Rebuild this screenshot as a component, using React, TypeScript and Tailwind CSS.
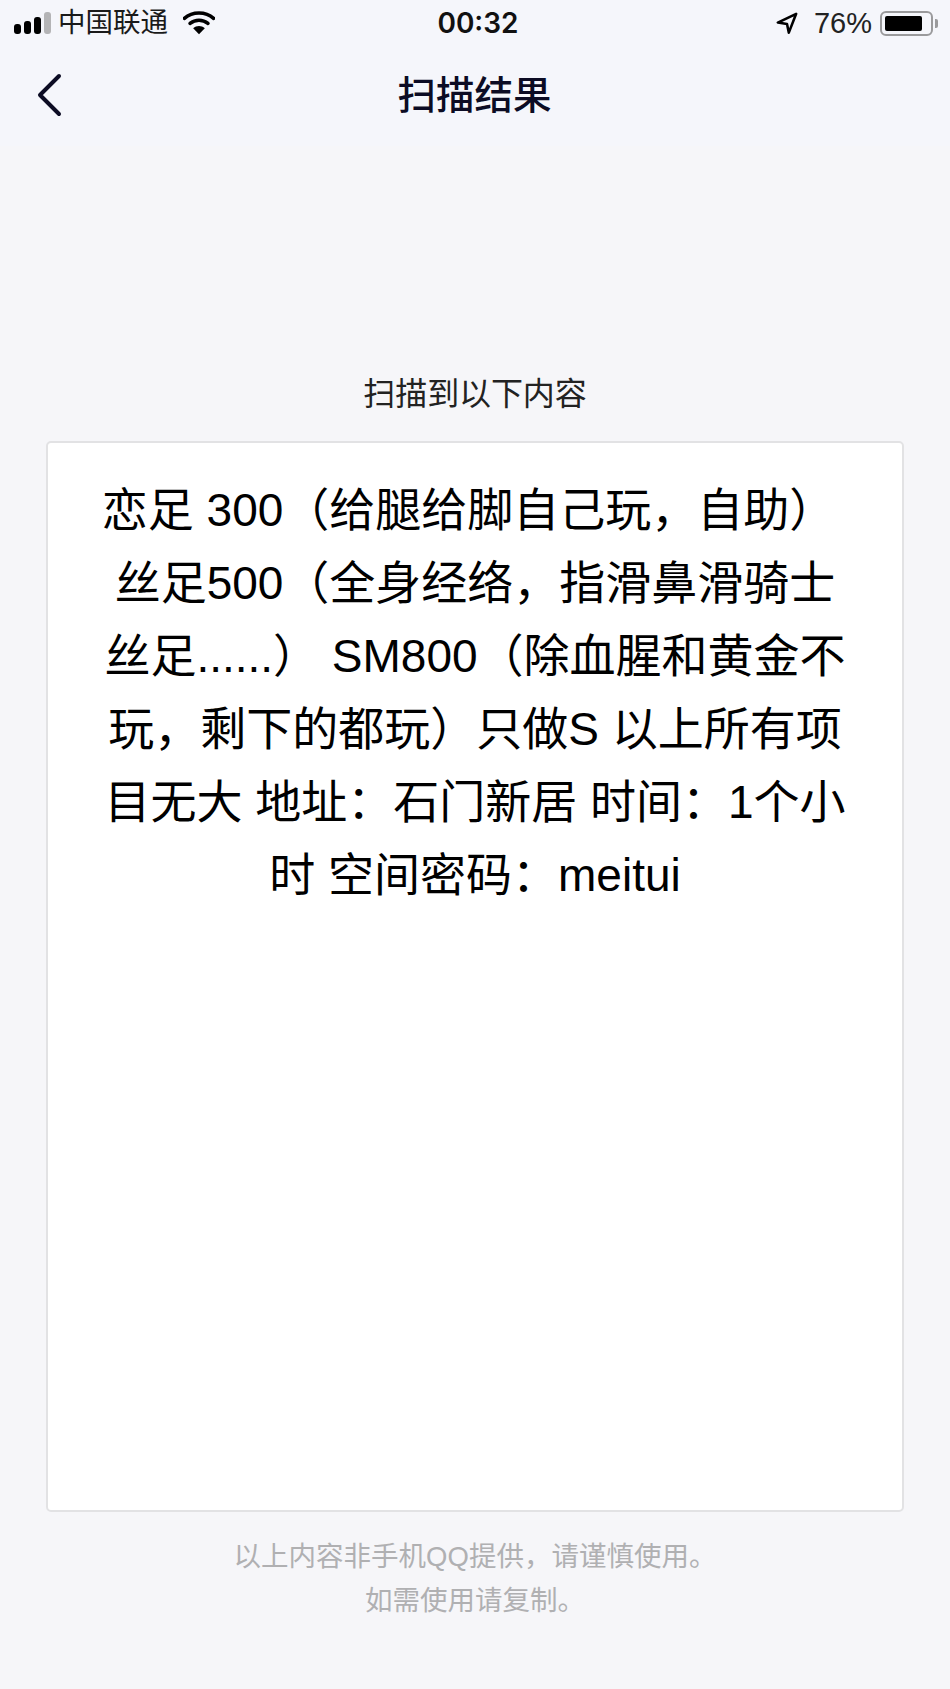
import React from "react";

const stack = { fontFamily: '"Liberation Sans", "Noto Sans CJK SC", sans-serif' };

function Signal() {
  return (
    <svg width="37" height="22" viewBox="0 0 37 22" className="block">
      <rect x="0" y="12" width="7" height="10" rx="3" fill="#000" />
      <rect x="10" y="9" width="7" height="13" rx="3" fill="#000" />
      <rect x="20" y="5" width="7" height="17" rx="3" fill="#000" />
      <rect x="30" y="0" width="7" height="22" rx="3" fill="#b4b4b6" />
    </svg>
  );
}

function Wifi() {
  return (
    <svg width="32" height="24" viewBox="0 0 34 25" className="block">
      <path d="M1.5 7.5C10 0 24 0 32.5 7.5" fill="none" stroke="#000" strokeWidth="3.8" strokeLinecap="round" />
      <path d="M7.5 13C13 8.5 21 8.5 26.5 13" fill="none" stroke="#000" strokeWidth="3.8" strokeLinecap="round" />
      <path d="M10.8 18.2C14.5 15 19.5 15 23.2 18.2L17 24.5Z" fill="#000" />
    </svg>
  );
}

function Locate() {
  return (
    <svg width="22" height="22" viewBox="0 0 24 24" className="block">
      <path d="M22 2L2 11.5L12 13L14 22.5Z" fill="none" stroke="#000" strokeWidth="2.8" strokeLinejoin="round" />
    </svg>
  );
}

function Battery() {
  return (
    <div className="flex items-center gap-[2px]">
      <div className="w-[53px] h-[25px] rounded-[6px] border-2 border-[#9a9a9c] p-[3px]">
        <div className="w-[37px] h-full rounded-[2px] bg-black" />
      </div>
      <div className="w-[3px] h-[9px] rounded-r-[2px] bg-[#9a9a9c]" />
    </div>
  );
}

export default function App() {
  return (
    <div style={stack} className="w-[950px] h-[1689px] bg-[#f6f6f9] flex flex-col overflow-hidden text-black">
      <div className="relative h-[46px] flex items-center justify-between pl-[14px] pr-[12px] bg-[#f5f6fb]">
        <div className="flex items-center">
          <Signal />
          <span className="ml-[7px] text-[27.5px] leading-none text-[#1a1a1a]">中国联通</span>
          <span className="ml-[15px]"><Wifi /></span>
        </div>
        <div className="absolute left-0 right-0 text-center text-[28px] leading-none font-semibold font-['Inter'] text-[#111] pl-[6px]">00:32</div>
        <div className="flex items-center">
          <span className="mr-[2px]"><Locate /></span>
          <span className="ml-[14px] mr-[8px] text-[29px] leading-none text-[#222]">76%</span>
          <Battery />
        </div>
      </div>
      <div className="relative h-[100px] flex items-center justify-center bg-[#f5f6fb]">
        <svg width="26" height="44" viewBox="0 0 26 44" className="absolute left-[37px] top-[27px]">
          <path d="M22 3L3 22L22 41" fill="none" stroke="#0c0c24" strokeWidth="4" strokeLinecap="round" strokeLinejoin="round" />
        </svg>
        <h1 className="text-[38.5px] leading-none font-medium text-[#0c0c24] mt-[1px] -ml-[1px]">扫描结果</h1>
      </div>
      <p className="mt-[230px] text-center text-[32px] leading-[36px] text-[#222] tracking-[-0.1px]">扫描到以下内容</p>
      <div className="mx-[46px] mt-[29px] h-[1071px] bg-white border-2 border-[#e2e2e4] rounded-[5px] pt-[31px] text-center text-[46px] leading-[73px] text-black">
        恋足 300（给腿给脚自己玩，自助）{"\u00a0"}<br />
        丝足500（全身经络，指滑鼻滑骑士<br />
        丝足......） SM800（除血腥和黄金不<br />
        玩，剩下的都玩）只做S 以上所有项<br />
        目无大 地址：石门新居 时间：1个小<br />
        时 空间密码：meitui
      </div>
      <p className="mt-[23px] text-center text-[27.5px] leading-[44px] text-[#b0b0b2]">
        以上内容非手机QQ提供，请谨慎使用。<br />如需使用请复制。
      </p>
    </div>
  );
}
